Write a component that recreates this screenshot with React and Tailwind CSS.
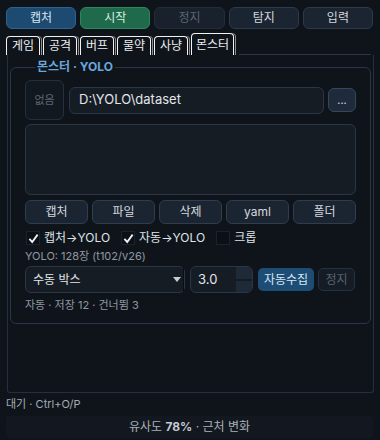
import React from 'react';

const topButtons = [
  { label: '캡처', cls: 'bg-[#1d4a71] border-[#2d6391] text-[#d8e6f3]' },
  { label: '시작', cls: 'bg-[#1f6a4b] border-[#2e8660] text-[#d9efe2]' },
  { label: '정지', cls: 'bg-[#19212c] border-[#232d3a] text-[#5b6470]' },
  { label: '탐지', cls: 'bg-[#1b2431] border-[#2c3a4b] text-[#d2d8df]' },
  { label: '입력', cls: 'bg-[#1b2431] border-[#2c3a4b] text-[#d2d8df]' },
];

const tabs = ['게임', '공격', '버프', '물약', '사냥'];
const actions = ['캡처', '파일', '삭제', 'yaml', '폴더'];

const Check = ({ checked, label }) => (
  <label className="flex items-center gap-[4px]">
    <span className="w-[14px] h-[14px] bg-[#0c1016] border border-[#1a222c] flex items-center justify-center">
      {checked && (
        <svg width="11" height="11" viewBox="0 0 12 12">
          <path d="M1.5 6.5 L4.6 9.8 L10.5 1.8" stroke="#eef1f4" strokeWidth="2" fill="none" />
        </svg>
      )}
    </span>
    <span className="text-[#dfe4e9]">{label}</span>
  </label>
);

const App = () => {
  return (
    <div
      className="w-[380px] h-[440px] bg-[#0f141b] text-[12px] text-[#d2d8df] overflow-hidden"
      style={{ fontFamily: '"Inter", "Noto Sans CJK KR", sans-serif' }}
    >
      <div className="grid grid-cols-5 gap-[4px] pl-[6px] pr-[7px] pt-[7px]">
        {topButtons.map((b) => (
          <button key={b.label} className={`h-[22px] rounded-[6px] border ${b.cls}`}>
            {b.label}
          </button>
        ))}
      </div>

      <div className="flex items-end gap-[3px] pl-[6px] pr-[9px] mt-[4px] h-[22px]">
        {tabs.map((t) => (
          <div
            key={t}
            className="w-[34px] h-[19px] border-l border-t border-r border-[#f2f2f2] rounded-t-[4px] shadow-[1px_0_0_#0f141b,2px_0_0_#8d8d8d] flex items-center justify-center text-[#eceef0]"
          >
            {t}
          </div>
        ))}
        <div className="w-[43px] h-[22px] border-l border-t border-r border-[#f2f2f2] rounded-t-[4px] shadow-[1px_0_0_#0f141b,2px_0_0_#8d8d8d] flex items-center justify-center text-[#eceef0]">
          몬스터
        </div>
        <div className="flex-1 ml-[2px] border-b border-[#2a3546] rounded-r-[2px]" />
      </div>

      <div className="ml-[7px] mr-[6px] h-[338px] border-l border-r border-b border-[#25303e] rounded-b-[3px] px-[2px] pt-[4px]">
        <fieldset className="border border-[#2a3546] rounded-[6px] px-[14px] pb-[10px] pt-[5px]">
          <legend className="ml-[10px] px-[2px] text-[12px] font-bold text-[#6aa5dc] leading-[16px]">
            몬스터 · YOLO
          </legend>

          <div className="flex items-center h-[40px]">
            <div className="w-[39px] h-[40px] rounded-[6px] border border-[#26303d] bg-[#121820] flex items-center justify-center text-[11px] text-[#5f6873]">
              없음
            </div>
            <div className="ml-[5px] flex-1 h-[27px] rounded-[6px] border border-[#2a3546] bg-[#161c24] flex items-center px-[9px] text-[13px] text-[#e2e6ea]">
              D:\YOLO\dataset
            </div>
            <button className="ml-[4px] w-[28px] h-[24px] rounded-[6px] border border-[#34475d] bg-[#1f2b3a] text-[#d6dce2] text-[11px] leading-none">
              ...
            </button>
          </div>

          <div className="mt-[4px] h-[71px] rounded-[6px] border border-[#2a3546] bg-[#161c24]" />

          <div className="mt-[5px] grid grid-cols-5 gap-[4px]">
            {actions.map((a) => (
              <button key={a} className="h-[24px] rounded-[6px] border border-[#2e3d50] bg-[#1b2532] text-[#d2d8df]">
                {a}
              </button>
            ))}
          </div>

          <div className="mt-[6px] h-[16px] flex items-center gap-[11px] pl-[1px]">
            <Check checked label="캡처→YOLO" />
            <Check checked label="자동→YOLO" />
            <Check label="크롭" />
          </div>

          <div className="mt-[3px] text-[11px] leading-[14px] text-[#8f98a3]">YOLO: 128장 (t102/v26)</div>

          <div className="mt-[3px] flex items-center h-[27px]">
            <div className="w-[160px] h-[27px] rounded-[6px] border border-[#2a3546] bg-[#161c24] flex items-center justify-between pl-[7px] text-[#e2e6ea]">
              <span>수동 박스</span>
              <span className="w-[14px] h-full flex items-center justify-center border-r border-[#0a0d12]">
                <svg width="8" height="5" viewBox="0 0 8 5">
                  <path d="M0 0 H8 L4 5 Z" fill="#c9ced4" />
                </svg>
              </span>
            </div>
            <div className="ml-[5px] w-[63px] h-[27px] rounded-[6px] border border-[#2a3546] bg-[#161c24] flex overflow-hidden">
              <span className="flex-1 flex items-center pl-[7px] text-[13px] text-[#e2e6ea]">3.0</span>
              <span className="w-[16px] flex flex-col gap-[2px]">
                <span className="flex-1 bg-[#1f2a38]" />
                <span className="flex-1 bg-[#1f2a38]" />
              </span>
            </div>
            <button className="ml-[5px] w-[56px] h-[23px] rounded-[5px] bg-[#1d4d75] text-[#d8e6f3]">자동수집</button>
            <button className="ml-[4px] w-[37px] h-[23px] rounded-[5px] border border-[#26313f] bg-[#151c26] text-[#59626e]">
              정지
            </button>
          </div>

          <div className="mt-[4px] text-[11px] leading-[16px] text-[#8f98a3]">자동 · 저장 12 · 건너뜀 3</div>
        </fieldset>
      </div>

      <div className="mt-[4px] pl-[6px] text-[11px] leading-[14px] text-[#a3abb4]">대기 · Ctrl+O/P</div>

      <div className="mt-[5px] ml-[6px] mr-[7px] h-[22px] rounded-[4px] bg-[#131820] flex items-center justify-center text-[12px] text-[#a9b0b8]">
        유사도&nbsp;<span className="font-bold text-[#c4cad1]">78%</span>&nbsp;· 근처 변화
      </div>
    </div>
  );
};

export default App;
